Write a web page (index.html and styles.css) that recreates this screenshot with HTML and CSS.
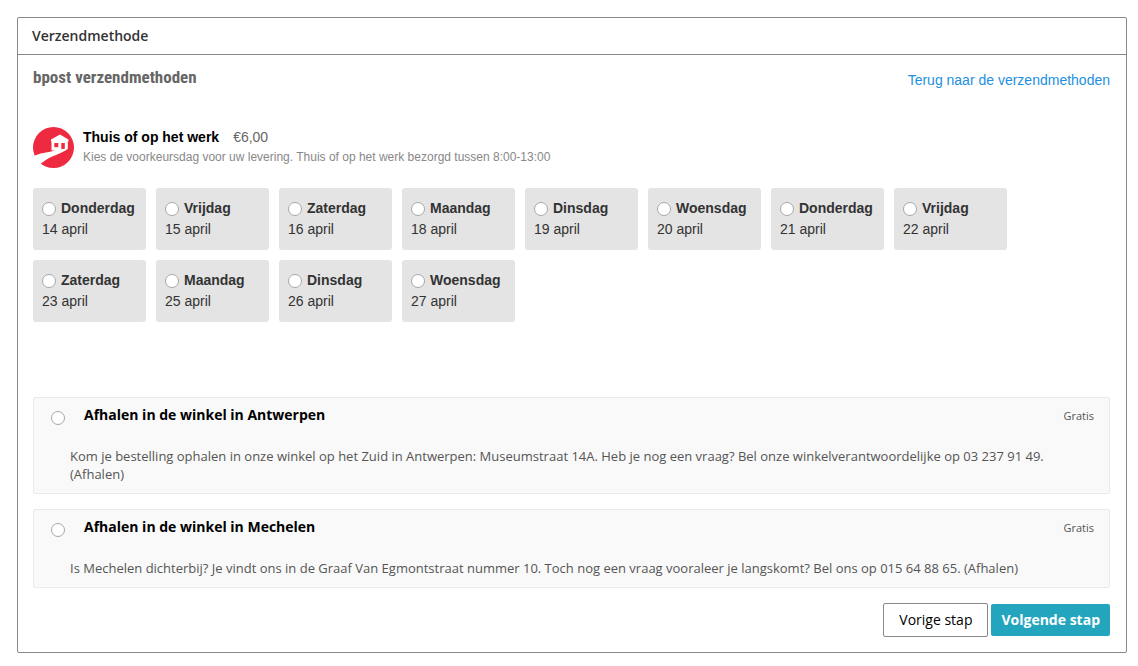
FILE: index.html
```html
<!DOCTYPE html>
<html lang="nl">
<head>
    <meta charset="UTF-8">
    <meta name="viewport" content="width=device-width, initial-scale=1.0">
    <title>Verzendmethode</title>
    <link rel="stylesheet" href="styles.css">
</head>
<body>

    <form class="checkout-step">
        <h1 class="step-title">Verzendmethode</h1>

        <div class="step-content">
            <div class="bpost-header">
                <h2>bpost verzendmethoden</h2>
                <a href="#">Terug naar de verzendmethoden</a>
            </div>

            <div class="method">
                <svg class="method-icon" viewBox="0 0 41 41" aria-hidden="true">
                    <circle cx="20.5" cy="20.5" r="20.5" fill="#ee2a40"/>
                    <path d="M2 28.500C10 25 16 26 24 22.500L35 21.500C29 27 18 28 8 36.500L2 39L-1 30Z" fill="#fff"/>
                    <path d="M18 12.500L27 7.500L35.500 12.500V14.500H34.800V22L31.800 22.500V16H28.300V23L18.500 23.500V14.500H18Z" fill="#fff"/>
                    <path d="M21.300 16h4v4.200h-4z" fill="#ee2a40"/>
                </svg>
                <div class="method-text">
                    <div class="method-name"><strong>Thuis of op het werk</strong><span>€6,00</span></div>
                    <p>Kies de voorkeursdag voor uw levering. Thuis of op het werk bezorgd tussen 8:00-13:00</p>
                </div>
            </div>

            <div class="dates">
                <label class="date"><span class="day"><input type="radio" name="date" value="14-04"> Donderdag</span>14 april</label>
                <label class="date"><span class="day"><input type="radio" name="date" value="15-04"> Vrijdag</span>15 april</label>
                <label class="date"><span class="day"><input type="radio" name="date" value="16-04"> Zaterdag</span>16 april</label>
                <label class="date"><span class="day"><input type="radio" name="date" value="18-04"> Maandag</span>18 april</label>
                <label class="date"><span class="day"><input type="radio" name="date" value="19-04"> Dinsdag</span>19 april</label>
                <label class="date"><span class="day"><input type="radio" name="date" value="20-04"> Woensdag</span>20 april</label>
                <label class="date"><span class="day"><input type="radio" name="date" value="21-04"> Donderdag</span>21 april</label>
                <label class="date"><span class="day"><input type="radio" name="date" value="22-04"> Vrijdag</span>22 april</label>
                <label class="date"><span class="day"><input type="radio" name="date" value="23-04"> Zaterdag</span>23 april</label>
                <label class="date"><span class="day"><input type="radio" name="date" value="25-04"> Maandag</span>25 april</label>
                <label class="date"><span class="day"><input type="radio" name="date" value="26-04"> Dinsdag</span>26 april</label>
                <label class="date"><span class="day"><input type="radio" name="date" value="27-04"> Woensdag</span>27 april</label>
            </div>

            <div class="pickup">
                <div class="pickup-head">
                    <input type="radio" name="pickup" id="antwerpen">
                    <label for="antwerpen">Afhalen in de winkel in Antwerpen</label>
                    <span class="price">Gratis</span>
                </div>
                <p>Kom je bestelling ophalen in onze winkel op het Zuid in Antwerpen: Museumstraat 14A. Heb je nog een vraag? Bel onze winkelverantwoordelijke op 03 237 91 49. (Afhalen)</p>
            </div>

            <div class="pickup">
                <div class="pickup-head">
                    <input type="radio" name="pickup" id="mechelen">
                    <label for="mechelen">Afhalen in de winkel in Mechelen</label>
                    <span class="price">Gratis</span>
                </div>
                <p>Is Mechelen dichterbij? Je vindt ons in de Graaf Van Egmontstraat nummer 10. Toch nog een vraag vooraleer je langskomt? Bel ons op 015 64 88 65. (Afhalen)</p>
            </div>

            <div class="buttons">
                <button type="button" class="btn-back">Vorige stap</button>
                <button type="submit" class="btn-next">Volgende stap</button>
            </div>
        </div>
    </form>

</body>
</html>
```

FILE: styles.css
```css
* {
    box-sizing: border-box;
}
body {
    margin: 17px 11px 13px 17px;
    background: #fff;
    color: #333;
    font-family: "Open Sans", sans-serif;
    font-size: 14px;
}
h1, h2, p {
    margin: 0;
}
input[type="radio"] {
    appearance: none;
    flex: none;
    width: 14px;
    height: 14px;
    margin: 0;
    border: 1px solid #a8a8a8;
    border-radius: 50%;
    background: #fff;
}
input[type="radio"]:checked {
    border: 4px solid #24a5be;
}
.checkout-step {
    border: 1px solid #888;
    border-radius: 2px;
}
.step-title {
    padding: 0 14px;
    border-bottom: 1px solid #888;
    font-size: 14px;
    font-weight: 600;
    line-height: 36px;
}
.step-content {
    padding: 12px 16px 15px 15px;
}

/* bpost */
.bpost-header {
    display: flex;
    justify-content: space-between;
    align-items: flex-end;
    margin-bottom: 37px;
    font-family: "Liberation Sans", Arial, sans-serif;
}
.bpost-header h2 {
    padding-bottom: 3px;
    color: #666;
    font-family: "Roboto Condensed", Roboto, sans-serif;
    font-size: 17px;
    font-weight: 700;
    line-height: 20px;
}
.bpost-header a {
    color: #1e8fe1;
    line-height: 20px;
    text-decoration: none;
}
.bpost-header a:hover {
    text-decoration: underline;
}
.method {
    display: flex;
    gap: 9px;
    margin-bottom: 20px;
    font-family: "Liberation Sans", Arial, sans-serif;
}
.method-icon {
    flex: none;
    width: 41px;
    height: 41px;
}
.method-name {
    display: flex;
    gap: 14px;
    color: #666;
    line-height: 20px;
}
.method-name strong {
    color: #000;
}
.method-text p {
    color: #888;
    font-size: 12px;
    line-height: 20px;
}
.dates {
    display: flex;
    flex-wrap: wrap;
    gap: 10px;
    margin-bottom: 75px;
    font-family: "Liberation Sans", Arial, sans-serif;
}
.date {
    width: 113px;
    padding: 10px 9px;
    border-radius: 3px;
    background: #e4e4e4;
    line-height: 21px;
    cursor: pointer;
}
.day {
    display: flex;
    align-items: center;
    gap: 5px;
    font-weight: bold;
}

/* afhalen in de winkel */
.pickup {
    margin-bottom: 15px;
    padding: 8px 15px 10px 17px;
    border: 1px solid #eaeaea;
    border-radius: 2px;
    background: #f9f9f9;
}
.pickup-head {
    display: flex;
    align-items: flex-end;
    margin-bottom: 22px;
    line-height: 18px;
}
.pickup-head label {
    flex: 1;
    padding: 0 19px 1px;
    color: #000;
    font-weight: 700;
}
.price {
    color: #555;
    font-size: 11px;
}
.pickup p {
    padding-left: 19px;
    color: #555;
    font-size: 13px;
    line-height: 18px;
}
.buttons {
    display: flex;
    justify-content: flex-end;
    align-items: center;
    gap: 3px;
}
.buttons button {
    border-radius: 2px;
    font-family: inherit;
    font-size: 14px;
    line-height: 18px;
    cursor: pointer;
}
.btn-back {
    padding: 7px 15px;
    border: 1px solid #888;
    background: #fff;
    color: #000;
}
.btn-next {
    padding: 7px 10px;
    border: 0;
    background: #24a5be;
    color: #fff;
    font-weight: 700;
}
```
